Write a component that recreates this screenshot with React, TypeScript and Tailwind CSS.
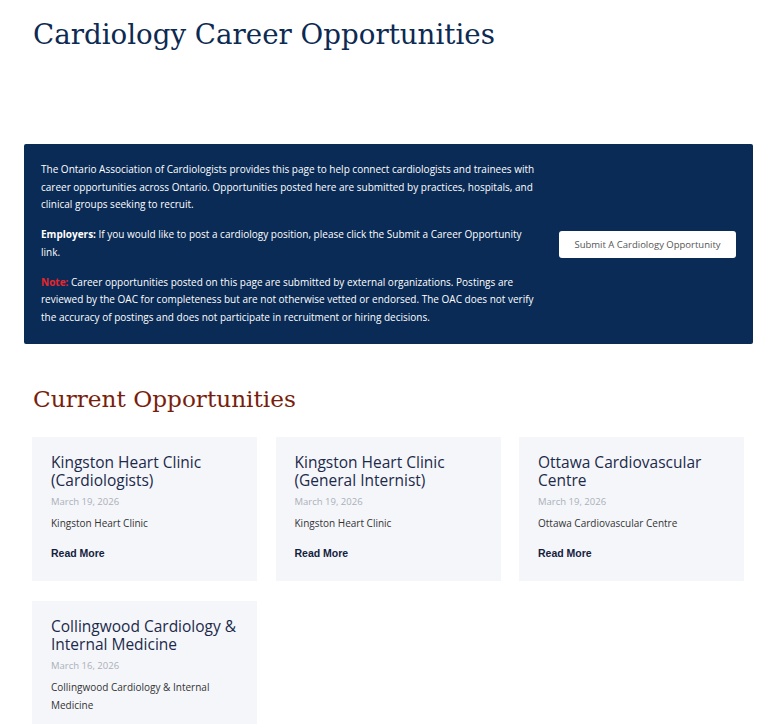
const jobs = [
  { title: 'Kingston Heart Clinic (Cardiologists)', date: 'March 19, 2026', org: 'Kingston Heart Clinic' },
  { title: 'Kingston Heart Clinic (General Internist)', date: 'March 19, 2026', org: 'Kingston Heart Clinic' },
  { title: 'Ottawa Cardiovascular Centre', date: 'March 19, 2026', org: 'Ottawa Cardiovascular Centre' },
  { title: 'Collingwood Cardiology & Internal Medicine', date: 'March 16, 2026', org: 'Collingwood Cardiology & Internal Medicine' },
];

function JobCard({ title, date, org }: { title: string; date: string; org: string }) {
  return (
    <div className="bg-[#f5f6fa] px-[19px] pt-[16px] pb-[21px]">
      <h3 className="text-[15.5px] leading-[18px] text-[#1b2a4a]">{title}</h3>
      <p className="mt-[6px] text-[9.5px] leading-[14px] text-[#aab0b8]">{date}</p>
      <p className="mt-[5px] text-[10px] leading-[18px] text-[#333]">{org}</p>
      <a className="mt-[14px] block text-[10.5px] leading-[14px] font-bold text-[#14213d] font-['Liberation_Sans',Arial,sans-serif]">
        Read More
      </a>
    </div>
  );
}

export default function App() {
  return (
    <div className="min-h-screen bg-white font-['Open_Sans',sans-serif]">
      <div className="w-[729px] ml-[24px] pt-[17px]">
        <h1 className="pl-[9px] text-[27.7px] leading-[36px] text-[#0d2a52] font-['DejaVu_Serif',serif]">
          Cardiology Career Opportunities
        </h1>

        <div className="mt-[91px] flex items-center rounded-[2px] bg-[#0a2b56] py-[17px] pl-[17px] pr-[17px]">
          <div className="w-[498px] text-[10px] leading-[17.7px] text-white">
            <p>
              The Ontario Association of Cardiologists provides this page to help connect cardiologists and trainees with
              career opportunities across Ontario. Opportunities posted here are submitted by practices, hospitals, and
              clinical groups seeking to recruit.
            </p>
            <p className="mt-[12px]">
              <strong className="font-bold">Employers:</strong> If you would like to post a cardiology position, please
              click the Submit a Career Opportunity link.
            </p>
            <p className="mt-[12px]">
              <strong className="font-bold text-[#e8262b]">Note:</strong> Career opportunities posted on this page are
              submitted by external organizations. Postings are reviewed by the OAC for completeness but are not
              otherwise vetted or endorsed. The OAC does not verify the accuracy of postings and does not participate in
              recruitment or hiring decisions.
            </p>
          </div>
          <div className="ml-auto">
            <button className="h-[27px] w-[177px] rounded-[3px] bg-white text-[9.5px] text-[#555]">
              Submit A Cardiology Opportunity
            </button>
          </div>
        </div>

        <h2 className="mt-[39px] pl-[9px] text-[23.2px] leading-[32px] text-[#7a1e0c] font-['DejaVu_Serif',serif]">
          Current Opportunities
        </h2>

        <div className="mt-[22px] ml-[8px] grid w-[712px] grid-cols-3 gap-x-[18.5px] gap-y-[20px]">
          {jobs.map((j) => (
            <JobCard key={j.title} {...j} />
          ))}
        </div>
      </div>
    </div>
  );
}
